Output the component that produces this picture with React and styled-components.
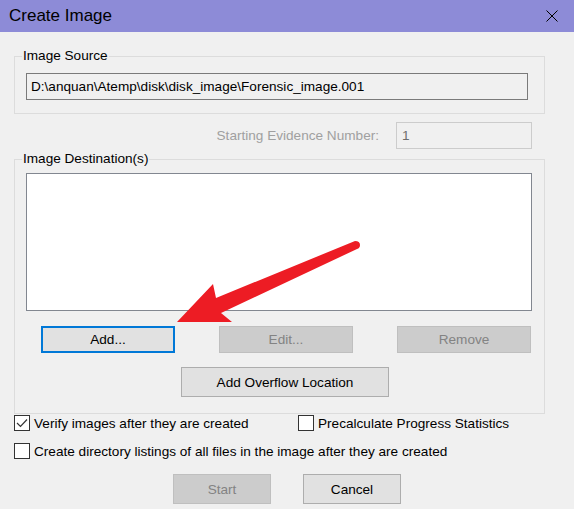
import styled, { createGlobalStyle } from 'styled-components';

const GlobalStyle = createGlobalStyle`
  html, body {
    margin: 0;
    padding: 0;
    background: #f0f0f0;
  }
  body {
    font-family: 'Liberation Sans', Arial, sans-serif;
    font-size: 13.6px;
    color: #000;
  }
`;

const Window = styled.div`
  position: relative;
  width: 574px;
  height: 509px;
  overflow: hidden;
  background: #f0f0f0;
`;

const TitleBar = styled.div`
  height: 32px;
  background: #8d8bd7;
  display: flex;
  align-items: center;
  justify-content: space-between;
  padding: 0 16px 0 9px;
  font-size: 17px;
  color: #000;
`;

const Body = styled.div`
  display: flex;
  flex-direction: column;
  padding: 16px 29px 0 14px;
`;

const Group = styled.fieldset`
  margin: 0;
  border: 1px solid #dcdcdc;
  padding: ${({ $pad }) => $pad};
  min-width: 0;
`;

const Legend = styled.legend`
  padding: 0 1px;
  margin-left: -4px;
  line-height: 16px;
`;

const PathField = styled.div`
  height: 25px;
  border: 1px solid #7a7a7a;
  background: #f0f0f0;
  display: flex;
  align-items: center;
  padding-left: 4px;
  white-space: nowrap;
`;

const EvidenceRow = styled.div`
  display: flex;
  justify-content: flex-end;
  align-items: center;
  gap: 17px;
  margin: 8px 13px 2px 0;
  color: #a0a0a0;
`;

const SmallInput = styled.div`
  box-sizing: border-box;
  width: 136px;
  height: 27px;
  border: 1px solid #cccccc;
  display: flex;
  align-items: center;
  padding-left: 5px;
  color: #6d6d6d;
`;

const ListBox = styled.div`
  height: 136px;
  background: #fff;
  border: 1px solid #828790;
`;

const ButtonRow = styled.div`
  display: flex;
  justify-content: ${({ $justify }) => $justify || 'center'};
  gap: ${({ $gap }) => $gap || '0'};
  padding: ${({ $pad }) => $pad || '0'};
`;

const Button = styled.button`
  box-sizing: border-box;
  width: ${({ $w }) => $w}px;
  height: ${({ $h }) => $h || 27}px;
  font: inherit;
  margin: 0;
  padding: 0;
  background: ${({ $disabled }) => ($disabled ? '#cccccc' : '#e1e1e1')};
  border: ${({ $disabled, $focus }) =>
    $focus ? '2px solid #0078d7' : $disabled ? '1px solid #bfbfbf' : '1px solid #adadad'};
  color: ${({ $disabled }) => ($disabled ? '#838383' : '#000')};
`;

const Options = styled.div`
  display: flex;
  flex-direction: column;
  gap: 12px;
  margin-top: 1px;
`;

const OptionRow = styled.div`
  display: flex;
  align-items: center;
`;

const CheckLabel = styled.label`
  display: flex;
  align-items: center;
  gap: 4px;
  width: ${({ $w }) => ($w ? `${$w}px` : 'auto')};
  white-space: nowrap;
`;

const Box = styled.span`
  box-sizing: border-box;
  width: 16px;
  height: 16px;
  border: 1px solid #333;
  background: #fff;
  display: flex;
  align-items: center;
  justify-content: center;
`;

const Arrow = styled.svg`
  position: absolute;
  left: 0;
  top: 0;
  pointer-events: none;
`;

const Check = ({ checked, label, width }) => (
  <CheckLabel $w={width}>
    <Box>
      {checked && (
        <svg width="12" height="10" viewBox="0 0 12 10">
          <path d="M1 5 L4.5 8.5 L11 1.5" fill="none" stroke="#333" strokeWidth="1.2" />
        </svg>
      )}
    </Box>
    {label}
  </CheckLabel>
);

export default function App() {
  return (
    <Window>
      <GlobalStyle />
      <TitleBar>
        <span>Create Image</span>
        <svg width="12" height="12" viewBox="0 0 12 12">
          <path d="M0.5 0.5 L11.5 11.5 M11.5 0.5 L0.5 11.5" stroke="#000" strokeWidth="1" />
        </svg>
      </TitleBar>
      <Body>
        <Group $pad="9px 16px 13px 11px">
          <Legend>Image Source</Legend>
          <PathField>D:\anquan\Atemp\disk\disk_image\Forensic_image.001</PathField>
        </Group>
        <EvidenceRow>
          <span>Starting Evidence Number:</span>
          <SmallInput>1</SmallInput>
        </EvidenceRow>
        <Group $pad="6px 12px 16px 11px">
          <Legend>Image Destination(s)</Legend>
          <ListBox />
          <ButtonRow $justify="flex-start" $gap="44px" $pad="15px 0 0 15px">
            <Button $w={134} $focus>Add...</Button>
            <Button $w={134} $disabled>Edit...</Button>
            <Button $w={134} $disabled>Remove</Button>
          </ButtonRow>
          <ButtonRow $justify="flex-start" $pad="14px 0 0 155px">
            <Button $w={208} $h={30}>Add Overflow Location</Button>
          </ButtonRow>
        </Group>
        <Options>
          <OptionRow>
            <Check checked label="Verify images after they are created" width={284} />
            <Check label="Precalculate Progress Statistics" />
          </OptionRow>
          <OptionRow>
            <Check label="Create directory listings of all files in the image after they are created" />
          </OptionRow>
        </Options>
        <ButtonRow $justify="flex-start" $gap="32px" $pad="15px 0 0 159px">
          <Button $w={98} $h={30} $disabled>Start</Button>
          <Button $w={98} $h={30}>Cancel</Button>
        </ButtonRow>
      </Body>
      <Arrow width="574" height="509" viewBox="0 0 574 509">
        <path
          d="M177 322 L213 284 L216 298 L355 241 Q360 241 360 245 Q360 248 357 249 L221 313 L232 322 Z"
          fill="#ed1c24"
        />
      </Arrow>
    </Window>
  );
}
